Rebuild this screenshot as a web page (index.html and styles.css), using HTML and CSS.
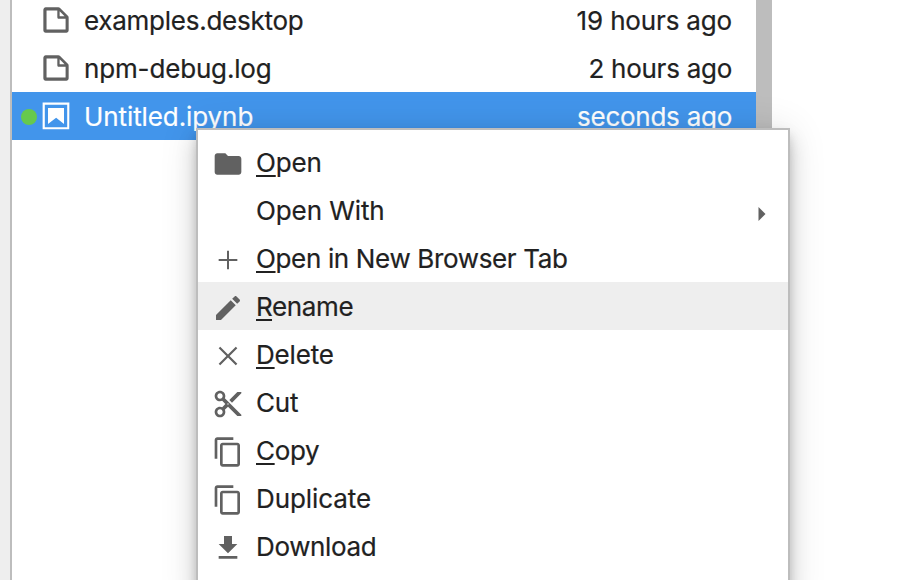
FILE: index.html
```
<!DOCTYPE html>
<html lang="en">
<head>
<meta charset="utf-8">
<title>File browser</title>
<link rel="stylesheet" href="styles.css">
</head>
<body>
<svg class="defs" width="0" height="0" aria-hidden="true">
  <symbol id="file" viewBox="0 0 22 22"><path d="M19.3 8.2l-5.5-5.5c-.3-.3-.7-.5-1.2-.5H3.9c-.8.1-1.6.9-1.6 1.8v14.1c0 .9.7 1.6 1.6 1.6h14.2c.9 0 1.6-.7 1.6-1.6V9.4c.1-.5-.1-.9-.4-1.2zm-5.8-3.3l3.4 3.6h-3.4V4.9zm3.9 12.7H4.7c-.1 0-.2 0-.2-.2V4.7c0-.2.1-.3.2-.3h7.2v4.4s0 .8.3 1.1c.3.3 1.1.3 1.1.3h4.3v7.2s-.1.2-.2.2z"/></symbol>
  <symbol id="copy" viewBox="0 0 24 24"><path d="M16 1H4c-1.1 0-2 .9-2 2v14h2V3h12V1zm3 4H8c-1.100 0-2 .9-2 2v14c0 1.100.9 2 2 2h11c1.100 0 2-.9 2-2V7c0-1.100-.9-2-2-2zm0 16H8V7h11v14z"/></symbol>
</svg>
<div class="app">
  <div class="sidebar"></div>
  <ul class="files">
    <li class="file"><svg class="icon"><use href="#file"/></svg><span class="name tight">examples.desktop</span><span class="time">19 hours ago</span></li>
    <li class="file"><svg class="icon"><use href="#file"/></svg><span class="name">npm-debug.log</span><span class="time tight">2 hours ago</span></li>
    <li class="file selected"><i class="dot"></i><svg class="icon" viewBox="0 0 22 22"><path d="M18.7 3.3v15.400H3.300V3.300h15.400m1.500-1.500H1.800v18.300h18.300l.1-18.300z"/><path d="M16.500 16.500l-5.400-4.300-5.600 4.300v-11h11z"/></svg><span class="name loose">Untitled.ipynb</span><span class="time tight">seconds ago</span></li>
  </ul>
  <div class="scrollbar"></div>
</div>
<ul class="menu">
  <li class="item"><svg class="icon" viewBox="0 0 24 24"><path d="M10 4H4c-1.100 0-1.990.9-1.990 2L2 18c0 1.100.9 2 2 2h16c1.100 0 2-.9 2-2V8c0-1.100-.9-2-2-2h-8l-2-2z"/></svg><span><u>O</u>pen</span></li>
  <li class="item"><span class="icon"></span><span class="loose">Open With</span><svg class="caret" viewBox="0 0 8 14"><path d="M.5 0L7.500 7 .5 14z"/></svg></li>
  <li class="item"><svg class="icon" viewBox="0 0 24 24"><path d="M19 12.750h-6.250V19h-1.500v-6.250H5v-1.500h6.250V5h1.500v6.250H19z"/></svg><span class="tighter"><u>O</u>pen in New Browser Tab</span></li>
  <li class="item active"><svg class="icon" viewBox="0 0 24 24"><path d="M3 17.250V21h3.750L17.810 9.940l-3.750-3.750L3 17.250zM20.710 7.040c.39-.39.39-1.020 0-1.410l-2.340-2.340c-.39-.39-1.020-.39-1.410 0l-1.830 1.830 3.750 3.750 1.830-1.830z"/></svg><span class="tighter"><u>R</u>ename</span></li>
  <li class="item"><svg class="icon" viewBox="0 0 24 24"><path d="M19 6.180L17.820 5 12 10.820 6.180 5 5 6.180 10.820 12 5 17.820 6.180 19 12 13.180 17.820 19 19 17.820 13.180 12z"/></svg><span><u>D</u>elete</span></li>
  <li class="item"><svg class="icon" viewBox="0 0 24 24"><path d="M9.640 7.640c.23-.5.36-1.050.36-1.640 0-2.210-1.790-4-4-4S2 3.790 2 6s1.790 4 4 4c.59 0 1.140-.13 1.640-.36L10 12l-2.360 2.360C7.140 14.130 6.590 14 6 14c-2.210 0-4 1.790-4 4s1.790 4 4 4 4-1.790 4-4c0-.59-.13-1.140-.36-1.640L12 14l7 7h3v-1L9.640 7.640zM6 8c-1.100 0-2-.89-2-2s.9-2 2-2 2 .89 2 2-.9 2-2 2zm0 12c-1.100 0-2-.89-2-2s.9-2 2-2 2 .89 2 2-.9 2-2 2zm6-7.500c-.28 0-.5-.22-.5-.5s.22-.5.5-.5.5.22.5.5-.22.5-.5.5zM19 3l-6 6 2 2 7-7V3z"/></svg><span>Cut</span></li>
  <li class="item"><svg class="icon"><use href="#copy"/></svg><span class="tighter"><u>C</u>opy</span></li>
  <li class="item"><svg class="icon"><use href="#copy"/></svg><span class="loose">Duplicate</span></li>
  <li class="item"><svg class="icon" viewBox="0 0 24 24"><path d="M19 9h-4V3H9v6H5l7 7 7-7zM5 18v2h14v-2H5z"/></svg><span class="tighter">Download</span></li>
</ul>
</body>
</html>
```
FILE: styles.css
```
* { box-sizing: border-box; }
body {
  margin: 0;
  width: 908px;
  height: 580px;
  overflow: hidden;
  position: relative;
  background: #fff;
  color: #212121;
  font: 26px/48px Inter, "Liberation Sans", sans-serif;
  letter-spacing: -.16px;
  -webkit-text-stroke: .2px currentColor;
}
ul { list-style: none; margin: 0; padding: 0; }
svg { fill: #616161; display: block; }
.defs { position: absolute; }
.loose { letter-spacing: -.09px; }
.tight { letter-spacing: -.26px; }
.tighter { letter-spacing: -.35px; }
.app { display: flex; height: 580px; }
.sidebar { width: 12px; background: #eee; border-right: 2px solid #bdbdbd; }
.files { width: 744px; margin-top: -4px; }
.file {
  display: flex;
  align-items: center;
  height: 48px;
  padding: 0 24px 0 28px;
  position: relative;
  white-space: nowrap;
}
.icon { width: 32px; height: 32px; flex: none; }
.name { margin-left: 12px; padding-top: 2px; }
.time { margin-left: auto; padding-top: 2px; }
.selected { background: #4295eb; color: #fff; }
.selected svg { fill: #fff; }
.dot {
  position: absolute;
  left: 9px;
  top: 17px;
  width: 16px;
  height: 16px;
  border-radius: 50%;
  background: #66c94d;
}
.scrollbar { width: 16px; background: #bdbdbd; }
.menu {
  position: absolute;
  left: 196px;
  top: 128px;
  width: 594px;
  height: 480px;
  padding: 8px 0;
  background: #fff;
  border: 2px solid #bdbdbd;
  box-shadow: 0 6px 10px -2px rgba(0,0,0,.2), 0 12px 20px 0 rgba(0,0,0,.14), 0 2px 36px 0 rgba(0,0,0,.12);
}
.item {
  display: flex;
  align-items: center;
  height: 48px;
  padding: 0 22px 0 14px;
  white-space: nowrap;
}
.item .icon { margin: 4px 12px 0 0; }
.item span { padding-top: 2px; }
.active { background: #eee; }
.caret { width: 8px; height: 14px; margin: 8px 0 0 auto; }
u { text-decoration-thickness: 2px; text-underline-offset: 3px; }
```
